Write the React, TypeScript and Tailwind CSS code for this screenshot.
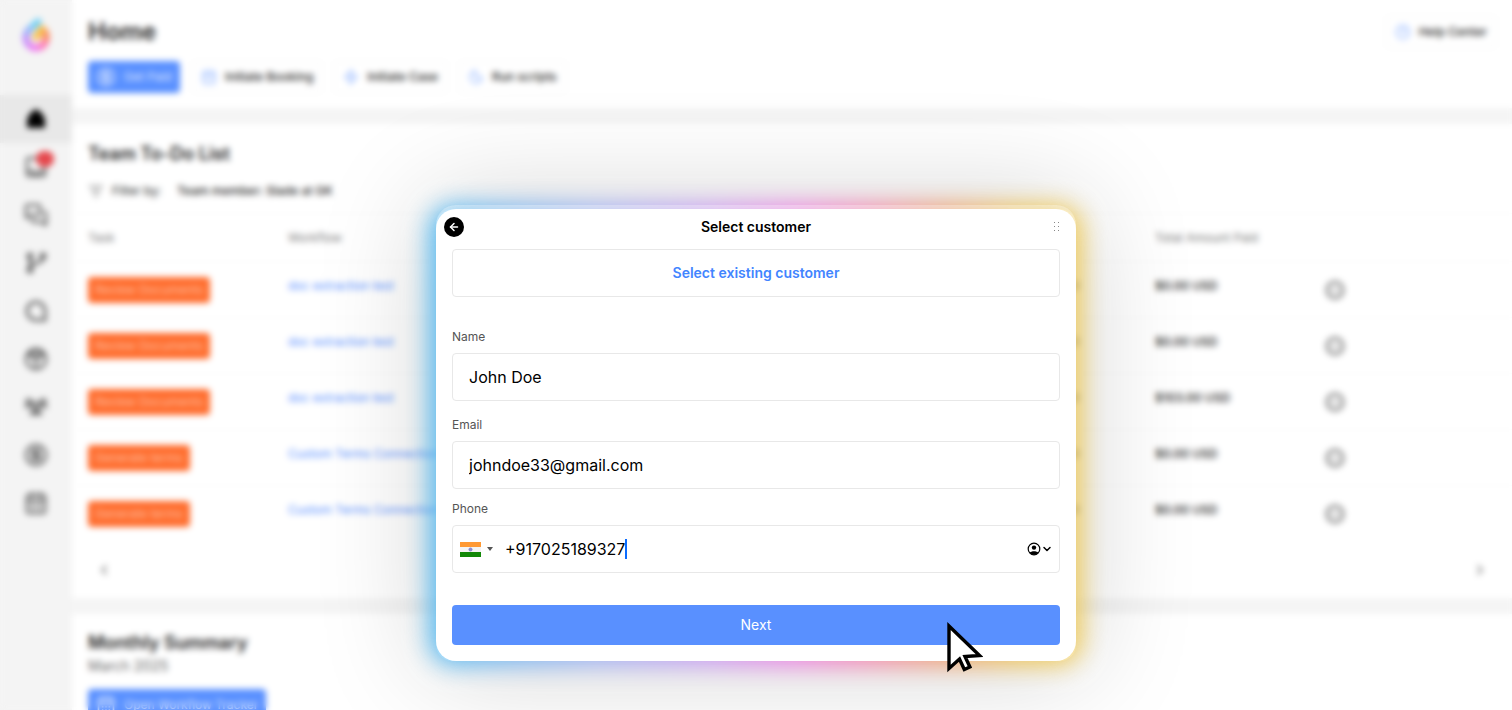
import { useState } from 'react';
import type { ReactNode } from 'react';
import {
  ArrowLeft,
  CalendarDays,
  ChevronDown,
  ChevronLeft,
  ChevronRight,
  CircleDollarSign,
  CircleHelp,
  ListFilter,
  MessagesSquare,
  Moon,
  Zap,
} from 'lucide-react';

const InboxIcon = ({ className }: { className?: string }) => (
  <svg viewBox="0 0 24 24" className={className} fill="none" stroke="currentColor" strokeWidth="2.500">
    <path d="M13 3H5a2 2 0 0 0-2 2v14a2 2 0 0 0 2 2h14a2 2 0 0 0 2-2v-8" />
    <path d="M3 16h5c1 3 7 3 8 0h5" />
  </svg>
);

const BranchIcon = ({ className }: { className?: string }) => (
  <svg viewBox="0 0 24 24" className={className} fill="none" stroke="currentColor" strokeWidth="3">
    <path d="M6 6v12M19 8c-1 5-12 3-13 8" />
    <circle cx="6" cy="5" r="2" />
    <circle cx="19" cy="5" r="2" />
    <circle cx="6" cy="19" r="2" />
  </svg>
);

const BubbleIcon = ({ className }: { className?: string }) => (
  <svg viewBox="0 0 24 24" className={className} fill="none" stroke="currentColor" strokeWidth="3">
    <path d="M12 3a9 9 0 0 0 0 18h9v-9a9 9 0 0 0-9-9Z" />
  </svg>
);

const PieIcon = ({ className }: { className?: string }) => (
  <svg viewBox="0 0 24 24" className={className} fill="none" stroke="currentColor" strokeWidth="2.500">
    <circle cx="12" cy="12" r="10" />
    <path d="M12 12v10M12 12 3 7M12 12l9-5" />
    <path d="M12 12 4 6a10 10 0 0 1 16 0Z" fill="currentColor" fillOpacity=".5" />
  </svg>
);

const TeamIcon = ({ className }: { className?: string }) => (
  <svg viewBox="0 0 24 24" className={className} fill="none" stroke="currentColor" strokeWidth="2.500">
    <circle cx="5" cy="7" r="2.500" />
    <circle cx="19" cy="7" r="2.500" />
    <circle cx="12" cy="11" r="3" />
    <path d="M1 13c1-2 4-2 6-1M23 13c-1-2-4-2-6-1M7 19c1-4 9-4 10 0Z" />
  </svg>
);

const navItems = [
  { label: 'Inbox', icon: InboxIcon, badge: true },
  { label: 'Chats', icon: MessagesSquare },
  { label: 'Workflows', icon: BranchIcon },
  { label: 'Conversations', icon: BubbleIcon },
  { label: 'Reports', icon: PieIcon },
  { label: 'Customers', icon: TeamIcon },
  { label: 'Payments', icon: CircleDollarSign },
  { label: 'Calendar', icon: CalendarDays },
];

const tasks = [
  { task: 'Review Documents', workflow: 'doc extraction test', amount: '$0.00 USD' },
  { task: 'Review Documents', workflow: 'doc extraction test', amount: '$0.00 USD' },
  { task: 'Review Documents', workflow: 'doc extraction test', amount: '$103.00 USD' },
  { task: 'Generate terms', workflow: 'Custom Terms Connection', amount: '$0.00 USD' },
  { task: 'Generate terms', workflow: 'Custom Terms Connection', amount: '$0.00 USD' },
];

const Logo = () => (
  <svg viewBox="0 0 32 36" className="h-9 w-8" fill="none" strokeWidth="7" strokeLinecap="round">
    <path d="M18 6 9 14" stroke="#6fd0f7" />
    <path d="M9 14a10 10 0 0 0-3 8" stroke="#9cb2fb" />
    <path d="M12 31a10 10 0 0 1-6-9" stroke="#c991fa" />
    <path d="M22 30a10 10 0 0 1-10 1" stroke="#ee7ff0" />
    <path d="M26 22a10 10 0 0 1-4 8" stroke="#ff79b4" />
    <path d="M22 13a10 10 0 0 1 4 9" stroke="#fb8d62" />
    <path d="m16 21 6-8" stroke="#f8c04a" />
  </svg>
);

const Sidebar = () => (
  <nav className="flex w-18 shrink-0 flex-col bg-[#f4f4f4]">
    <div className="flex h-[95px] justify-center pt-4">
      <Logo />
    </div>
    <a href="#home" aria-label="Home" className="flex h-12 items-center justify-center bg-[#e8e8e8]">
      <svg viewBox="0 0 24 24" className="size-6 fill-black">
        <path d="M12 2c4 2 9 7 9 12v7H3v-7C3 9 8 4 12 2Z" />
      </svg>
    </a>
    {navItems.map(({ label, icon: Icon, badge }) => (
      <a
        key={label}
        href={'#' + label.toLowerCase()}
        aria-label={label}
        className="relative flex h-12 items-center justify-center text-[#666]"
      >
        <Icon className="size-6" strokeWidth={2.5} />
        {badge && <span className="absolute top-2 left-9 h-4 w-[18px] rounded-full bg-[#e5484d]" />}
      </a>
    ))}
  </nav>
);

const ActionButton = ({ icon, children }: { icon: ReactNode; children: ReactNode }) => (
  <button className="flex h-8 items-center gap-2 rounded border border-[#f5f5f5] bg-white px-2 text-xs font-medium text-[#222]">
    <span className="text-[#8ab0ff]">{icon}</span>
    {children}
  </button>
);

const Header = () => (
  <header className="flex h-[108px] shrink-0 justify-between bg-white p-4 pb-0">
    <div>
      <h1 className="text-2xl leading-8 font-semibold">Home</h1>
      <div className="mt-[13px] flex gap-3">
        <button className="flex h-8 items-center gap-2 rounded bg-[#5990ff] px-2 text-xs text-white/80">
          <CircleDollarSign className="size-5" />
          Get Paid
        </button>
        <ActionButton icon={<CalendarDays className="size-4" />}>Initiate Booking</ActionButton>
        <ActionButton icon={<Zap className="size-4" />}>Initiate Case</ActionButton>
        <ActionButton icon={<Moon className="size-4" />}>Run scripts</ActionButton>
      </div>
    </div>
    <ActionButton icon={<CircleHelp className="size-4" />}>Help Center</ActionButton>
  </header>
);

const TodoList = () => (
  <section className="flex h-[474px] shrink-0 flex-col bg-white">
    <div className="h-[89px] shrink-0 px-4 pt-4">
      <h2 className="text-lg font-semibold">Team To-Do List</h2>
      <div className="mt-2 flex h-[30px] items-center gap-2 text-xs">
        <ListFilter className="size-4 text-[#666]" />
        <span>Filter by:</span>
        <button className="rounded px-2 font-medium">Team member: Slade at GK</button>
      </div>
    </div>
    <table className="w-full table-fixed text-left text-xs">
      <thead>
        <tr className="h-12 border-t border-[#fafafa] text-[#777]">
          <th className="w-[216px] pl-4 font-normal">Task</th>
          <th className="w-[728px] font-normal">Workflow</th>
          <th className="w-[139px] font-normal">Amount</th>
          <th className="w-[170px] font-normal">Total Amount Paid</th>
          <th />
        </tr>
      </thead>
      <tbody>
        {tasks.map(({ task, workflow, amount }, i) => (
          <tr key={i} className="h-14 border-t border-[#fafafa]">
            <td className="pl-4">
              <span className="inline-block rounded bg-[#ff6d2e] px-[7px] leading-[26px] text-[#ffc0a3]">{task}</span>
            </td>
            <td className="pb-2">
              <a href="#workflow" className="text-[#5990ff]">{workflow}</a>
            </td>
            <td className="pb-2 font-medium">$0.00 USD</td>
            <td className="pb-2 font-medium">{amount}</td>
            <td>
              <button aria-label="More" className="block text-[#888]">
                <svg viewBox="0 0 20 20" className="size-5" fill="none" stroke="currentColor">
                  <circle cx="10" cy="10" r="8" strokeWidth="3" />
                  <path d="M6 10h8" strokeWidth="1.500" />
                </svg>
              </button>
            </td>
          </tr>
        ))}
      </tbody>
    </table>
    <div className="flex flex-1 items-center justify-between px-6 text-[#555]">
      <button aria-label="Previous page"><ChevronLeft className="size-4" /></button>
      <button aria-label="Next page"><ChevronRight className="size-4" /></button>
    </div>
  </section>
);

const MonthlySummary = () => (
  <section className="flex-1 bg-white px-4 pt-4">
    <h2 className="text-lg leading-[26px] font-semibold">Monthly Summary</h2>
    <p className="text-sm text-[#666]">March 2025</p>
    <button className="mt-[13px] flex h-8 items-center gap-2 rounded bg-[#5990ff] px-2 text-xs text-white/80">
      <CalendarDays className="size-5" />
      Open Workflow Tracker
    </button>
  </section>
);

const IndiaFlag = () => (
  <svg viewBox="0 0 21 15" className="h-[15px] w-[21px]">
    <path fill="#ff9933" d="M0 0h21v5H0z" />
    <path fill="#f4f4f4" d="M0 5h21v5H0z" />
    <path fill="#128807" d="M0 10h21v5H0z" />
    <circle cx="10.500" cy="7.500" r="1.600" fill="#8f8fd0" stroke="#6f6fc0" strokeWidth=".6" />
  </svg>
);

const Cursor = () => (
  <svg viewBox="0 0 36 52" className="pointer-events-none absolute right-[93px] -bottom-[13px] h-[52px] w-9">
    <path
      d="M2 4v42.500l10.500-9.500 4.800 10.500 5.600-2.500-4.900-10.500 14.500-1Z"
      fill="#fff"
      stroke="#000"
      strokeWidth="3.400"
    />
  </svg>
);

type FieldProps = { id: string; label: string; value: string; onChange: (value: string) => void };

const Field = ({ id, label, value, onChange }: FieldProps) => (
  <div className="flex flex-col gap-2">
    <label htmlFor={id} className="text-xs text-[#555]">{label}</label>
    <input
      id={id}
      value={value}
      onChange={(e) => onChange(e.target.value)}
      className="h-12 rounded border border-[#e8e8e8] px-4 text-base text-black outline-none"
    />
  </div>
);

const CustomerDialog = () => {
  const [name, setName] = useState('John Doe');
  const [email, setEmail] = useState('johndoe33@gmail.com');
  const [phone, setPhone] = useState('+917025189327');

  return (
    <div role="dialog" aria-labelledby="dialog-title" className="relative w-[640px]">
      {/* soft grey shadow, then the rainbow glow */}
      <div className="absolute inset-0 rounded-2xl shadow-[0_0_110px_10px_rgba(0,0,0,0.18)]" />
      <div className="absolute -inset-x-1.5 -inset-y-1 rounded-3xl bg-[linear-gradient(90deg,#4fb9f0_0%,#9db2f5_25%,#c79bf5_42%,#ee7fe4_56%,#f784b0_67%,#f2a070_79%,#efc455_90%,#f0cd5c_100%)] blur-[12px]" />
      <div className="absolute inset-x-0 -top-1 h-12 rounded-t-[20px] bg-white/30" />

      <form className="relative flex flex-col rounded-[20px] bg-white px-4 pb-4" onSubmit={(e) => e.preventDefault()}>
        <div className="-mx-2 flex h-10 items-center justify-between pb-1">
          <button type="button" aria-label="Back" className="flex size-5 items-center justify-center rounded-full bg-black text-white">
            <ArrowLeft className="size-3" strokeWidth={3} />
          </button>
          <h2 id="dialog-title" className="text-sm font-semibold text-black">Select customer</h2>
          <svg viewBox="0 0 20 12" className="h-3 w-5 fill-[#888]">
            <path d="M6 1h1v1H6zM10 1h1v1h-1zM6 5h1v1H6zM10 5h1v1h-1zM6 9h1v1H6zM10 9h1v1h-1z" />
          </svg>
        </div>
        <button type="button" className="h-12 rounded border border-[#e8e8e8] text-sm font-semibold text-[#4285ff]">
          Select existing customer
        </button>

        <div className="mt-8 flex flex-col gap-4">
          <Field id="name" label="Name" value={name} onChange={setName} />
          <Field id="email" label="Email" value={email} onChange={setEmail} />
        </div>
        <div className="mt-3 flex flex-col gap-2">
          <label htmlFor="phone" className="text-xs text-[#555]">Phone</label>
          <div className="flex h-12 items-center rounded border border-[#e8e8e8] pr-[6px] pl-[7px]">
            <button type="button" aria-label="Country" className="mr-3 flex items-center gap-[6px]">
              <IndiaFlag />
              <span className="border-x-[3px] border-t-4 border-x-transparent border-t-[#555]" />
            </button>
            <input
              id="phone"
              type="tel"
              value={phone}
              onChange={(e) => setPhone(e.target.value)}
              className="field-sizing-content text-base text-black outline-none"
            />
            <span className="h-5 w-[2px] bg-[#0a6cff]" />
            <button type="button" aria-label="Autofill contact" className="ml-auto flex items-center text-black">
              <svg viewBox="0 0 14 14" className="size-[14px]">
                <circle cx="7" cy="7" r="5.800" fill="none" stroke="#000" strokeWidth="1.200" />
                <circle cx="7" cy="5.600" r="2.200" />
                <path d="M2.800 10.800C4 8.800 10 8.800 11.200 10.800 9 13.300 5 13.300 2.800 10.800Z" />
              </svg>
              <ChevronDown className="size-3" strokeWidth={3} />
            </button>
          </div>
        </div>
        <button type="submit" className="mt-8 h-10 rounded bg-[#5990ff] text-sm text-white">Next</button>
      </form>
      <Cursor />
    </div>
  );
};

const App = () => (
  <div className="relative flex h-screen overflow-hidden bg-[#f5f5f5] font-['Inter',sans-serif] text-[#222]">
    <Sidebar />
    <main className="flex min-w-0 flex-1 flex-col gap-4">
      <Header />
      <TodoList />
      <MonthlySummary />
    </main>
    <div className="absolute inset-0 flex items-start justify-center pt-[209px] backdrop-blur-[3px]">
      <CustomerDialog />
    </div>
  </div>
);

export default App;
